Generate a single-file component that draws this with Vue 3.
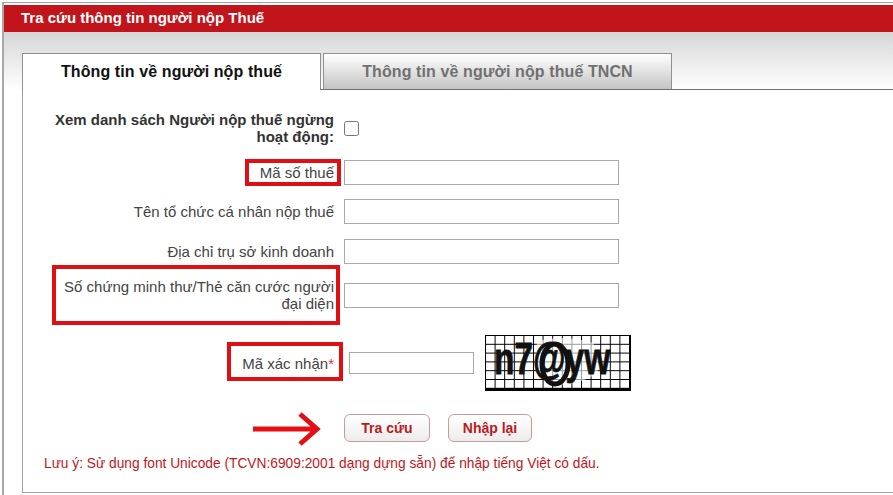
<script setup>
const rows = [
  { label: 'Mã số thuế', cls: 'r1' },
  { label: 'Tên tổ chức cá nhân nộp thuế', cls: 'r2' },
  { label: 'Địa chỉ trụ sở kinh doanh', cls: 'r3' },
  { label: 'Số chứng minh thư/Thẻ căn cước người đại diện', cls: 'r4' }
]
</script>

<template>
  <div class="page">
    <div class="frame">
      <div class="title">Tra cứu thông tin người nộp Thuế</div>
      <div class="body">
        <div class="tabs">
          <div class="tab active">Thông tin về người nộp thuế</div>
          <div class="tab">Thông tin về người nộp thuế TNCN</div>
        </div>
        <div class="panel">
          <div class="row r0">
            <label class="label strong">Xem danh sách Người nộp thuế ngừng hoạt động:</label>
            <span class="check"></span>
          </div>
          <div v-for="r in rows" :key="r.cls" class="row" :class="r.cls">
            <label class="label">{{ r.label }}</label>
            <input class="input" type="text" />
          </div>
          <div class="row r5">
            <label class="label">Mã xác nhận<span class="star">*</span></label>
            <input class="input small" type="text" />
            <svg class="captcha" width="146" height="56" viewBox="0 0 146 56">
              <defs>
                <pattern id="grid" width="9.6" height="8.8" patternUnits="userSpaceOnUse">
                  <path d="M0 0H9.6M0 0V8.8" stroke="#000" stroke-width="2" fill="none" />
                </pattern>
              </defs>
              <rect x="0.5" y="0.5" width="145" height="55" fill="#fff" stroke="#000" />
              <rect x="1" y="1" width="144" height="53" fill="url(#grid)" />
              <path d="M52 6Q80 -1 108 8Q118 22 112 38Q96 50 70 50Q52 44 50 28Z" fill="#fff" opacity=".6" />
              <ellipse cx="70" cy="29" rx="13" ry="20" fill="none" stroke="#111" stroke-width="5" />
              <rect x="0" y="53" width="146" height="3" fill="#000" />
              <text class="cap-text" transform="translate(9 39) scale(0.76 1)">n7@yw</text>
            </svg>
          </div>
          <div class="actions">
            <svg class="arrow" width="68" height="36" viewBox="0 0 68 36">
              <path d="M0 19H63M47 4L64 19L47 34" fill="none" stroke="#e30f14" stroke-width="5" />
            </svg>
            <button class="btn first">Tra cứu</button>
            <button class="btn">Nhập lại</button>
          </div>
          <p class="note">Lưu ý: Sử dụng font Unicode (TCVN:6909:2001 dạng dựng sẵn) để nhập tiếng Việt có dấu.</p>
          <span class="mark m1"></span>
          <span class="mark m2"></span>
          <span class="mark m3"></span>
        </div>
      </div>
    </div>
  </div>
</template>

<style>
html, body { margin: 0; background: #fff; }
</style>

<style scoped>
.page {
  width: 893px;
  height: 495px;
  overflow: hidden;
  background: #fff;
  font-family: "Liberation Sans", Arial, sans-serif;
  padding-top: 2px;
  box-sizing: border-box;
}
.frame {
  border-top: 1px solid #a0a0a0;
  border-left: 2px solid #a8a8a8;
  margin-left: 2px;
  height: 493px;
  box-sizing: border-box;
  padding-top: 2px;
}
.title {
  height: 27px;
  background: #c2151b;
  color: #fff;
  font-size: 15px;
  font-weight: bold;
  line-height: 26px;
  padding-left: 17px;
}
.body {
  padding: 1px 0 0 18px;
  background: linear-gradient(#d6d6d6, #fff 58px) no-repeat;
  background-size: 100% 58px;
  box-sizing: border-box;
}
.tabs {
  display: flex;
  gap: 2px;
  padding-top: 20px;
  height: 57px;
  box-sizing: border-box;
  border-bottom: 1px solid #707070;
}
.tab {
  width: 349px;
  height: 36px;
  box-sizing: border-box;
  border: 1px solid #909090;
  border-bottom: 0;
  background: linear-gradient(#fff, #c4c4c4);
  color: #707070;
  font-size: 16px;
  font-weight: bold;
  letter-spacing: 0.1px;
  line-height: 35px;
  text-align: center;
}
.tab.active {
  width: 299px;
  height: 37px;
  background: #fff;
  color: #111;
}
.panel {
  position: relative;
  border-left: 1px solid #a0a0a0;
  border-bottom: 1px solid #a0a0a0;
  height: 403px;
  box-sizing: border-box;
  background: #fff;
  font-size: 15px;
  color: #444;
}
.row {
  display: flex;
  align-items: center;
  gap: 10px;
  padding-left: 21px;
}
.label {
  width: 290px;
  text-align: right;
  line-height: 17px;
  flex: none;
}
.strong { font-weight: bold; color: #333; }
.r0 { padding-top: 20px; height: 36px; }
.r1 { margin-top: 14px; }
.r2 { margin-top: 14px; }
.r3 { margin-top: 15px; }
.r4 { margin-top: 14px; }
.r5 { margin-top: 23px; }
.input {
  width: 275px;
  height: 25px;
  box-sizing: border-box;
  border: 1px solid #a9a9a9;
  background: #fff;
  margin: 0;
  padding: 0;
}
.input.small {
  width: 125px;
  height: 22px;
  margin-left: 5px;
}
.check {
  width: 13px;
  height: 13px;
  border: 1px solid #767676;
  border-radius: 2.5px;
  background: #fff;
}
.star { color: #d33; }
.captcha { margin-left: 1px; flex: none; }
.cap-text {
  font-family: "Liberation Sans", Arial, sans-serif;
  font-size: 44px;
  font-weight: bold;
  fill: #111;
  stroke: #111;
  stroke-width: 0.8;
}
.actions {
  display: flex;
  align-items: center;
  margin: 19px 0 0 230px;
}
.arrow { margin-right: 23px; flex: none; }
.btn {
  height: 28px;
  width: 86px;
  box-sizing: border-box;
  border: 1.5px solid #c99a9a;
  border-radius: 6px;
  background: linear-gradient(#fff, #ececec);
  color: #b81c20;
  font-family: "Liberation Sans", Arial, sans-serif;
  font-size: 14px;
  font-weight: bold;
  padding: 0;
}
.btn.first { margin-right: 18px; }
.btn + .btn { width: 84px; }
.note {
  margin: 10px 0 0 21px;
  font-size: 13.75px;
  color: #c2151b;
  line-height: 16px;
}
.mark {
  position: absolute;
  border: 4px solid #e00f14;
  box-sizing: border-box;
}
.m1 { left: 222px; top: 69px; width: 96px; height: 27px; }
.m2 { left: 29px; top: 175px; width: 288px; height: 60px; }
.m3 { left: 204px; top: 252px; width: 116px; height: 39px; }
</style>
